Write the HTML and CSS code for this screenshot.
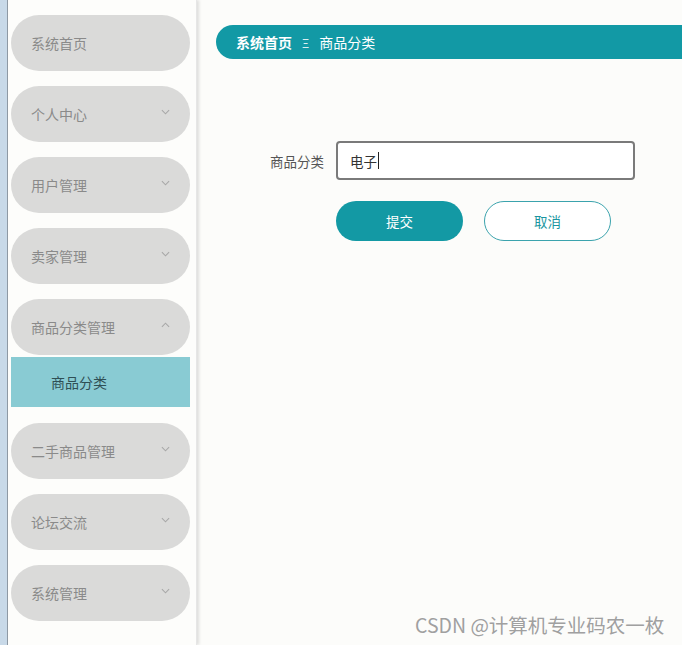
FILE: index.html
```
<!DOCTYPE html>
<html lang="zh">
<head>
    <meta charset="UTF-8">
    <title>商品分类</title>
    <link rel="stylesheet" href="styles.css">
</head>
<body>

<div class="edge"></div>

<div class="sidebar">
    <div class="menu-item">系统首页</div>
    <div class="menu-item">个人中心 <svg class="chev" viewBox="0 0 10 6"><path d="M1 1l4 4 4-4"/></svg></div>
    <div class="menu-item">用户管理 <svg class="chev" viewBox="0 0 10 6"><path d="M1 1l4 4 4-4"/></svg></div>
    <div class="menu-item">卖家管理 <svg class="chev" viewBox="0 0 10 6"><path d="M1 1l4 4 4-4"/></svg></div>
    <div class="menu-item open">商品分类管理 <svg class="chev" viewBox="0 0 10 6"><path d="M1 5l4-4 4 4"/></svg></div>
    <div class="sub-item">商品分类</div>
    <div class="menu-item">二手商品管理 <svg class="chev" viewBox="0 0 10 6"><path d="M1 1l4 4 4-4"/></svg></div>
    <div class="menu-item">论坛交流 <svg class="chev" viewBox="0 0 10 6"><path d="M1 1l4 4 4-4"/></svg></div>
    <div class="menu-item">系统管理 <svg class="chev" viewBox="0 0 10 6"><path d="M1 1l4 4 4-4"/></svg></div>
</div>

<div class="main">
    <div class="breadcrumb">
        <span class="crumb-home">系统首页</span>
        <span class="crumb-sep">Ξ</span>
        <span>商品分类</span>
    </div>

    <div class="form">
        <div class="form-row">
            <label>商品分类</label>
            <div class="input">电子<span class="caret"></span></div>
        </div>
        <div class="form-btns">
            <button class="btn btn-ok">提交</button>
            <button class="btn btn-cancel">取消</button>
        </div>
    </div>
</div>

<div class="watermark">CSDN @计算机专业码农一枚</div>

</body>
</html>
```

FILE: styles.css
```
body { margin: 0; display: flex; height: 645px; overflow: hidden; background: #fcfcfa; font-family: "Noto Sans CJK SC", "Noto Sans", sans-serif; }

/* bord de la fenêtre voisine */
.edge { width: 7px; background: #c8d9e8; border-right: 1px solid #8f9aa5; flex-shrink: 0; }

/* Menu latéral */
.sidebar { width: 185px; padding: 15px 0 0 3px; background: #fdfdfb; box-shadow: 2px 0 3px rgba(0,0,0,0.12); border-right: 1px solid #e6e6e6; flex-shrink: 0; }
.menu-item { width: 179px; height: 56px; box-sizing: border-box; border-radius: 28px; background: #dadad9; color: #8a8a8a; font-size: 14px; display: flex; align-items: center; justify-content: space-between; padding: 0 20px 0 20px; margin-bottom: 15px; }
.menu-item.open { margin-bottom: 2px; }
.chev { width: 9px; height: 6px; fill: none; stroke: #a8a8a8; stroke-width: 1.2; margin-top: -4px; }
.sub-item { width: 179px; height: 50px; background: #89cbd3; color: #2f4f55; font-size: 14px; display: flex; align-items: center; padding-left: 40px; box-sizing: border-box; margin-bottom: 16px; }

/* Contenu */
.main { flex-grow: 1; padding: 25px 0 0 19px; }
.breadcrumb { height: 34px; background: #1299a5; border-radius: 17px 0 0 17px; color: white; font-size: 14px; display: flex; align-items: center; padding-left: 20px; }
.crumb-home { font-weight: bold; }
.crumb-sep { margin: 0 10px; font-size: 12px; opacity: 0.85; }

.form { margin-top: 82px; padding-left: 54px; }
.form-row { display: flex; align-items: center; }
.form-row label { width: 66px; font-size: 13.5px; color: #555; }
.input { width: 299px; height: 39px; box-sizing: border-box; border: 2px solid #7a7a7a; border-radius: 4px; background: white; padding-left: 12px; font-size: 13.5px; color: #333; display: flex; align-items: center; }
.caret { display: inline-block; width: 1px; height: 17px; background: #222; margin-left: 1px; }

.form-btns { display: flex; gap: 21px; margin: 21px 0 0 66px; }
.btn { width: 127px; height: 40px; border-radius: 20px; font-size: 13.5px; font-family: inherit; cursor: pointer; }
.btn-ok { background: #1399a4; color: white; border: none; }
.btn-cancel { background: white; color: #1a95a0; border: 1px solid #3ba3ad; }

.watermark { position: absolute; left: 415px; top: 610px; font-size: 19.5px; color: #a0a0a0; text-shadow: 0 0 2px white; font-family: "Noto Sans CJK SC", "Liberation Sans", sans-serif; }
```
